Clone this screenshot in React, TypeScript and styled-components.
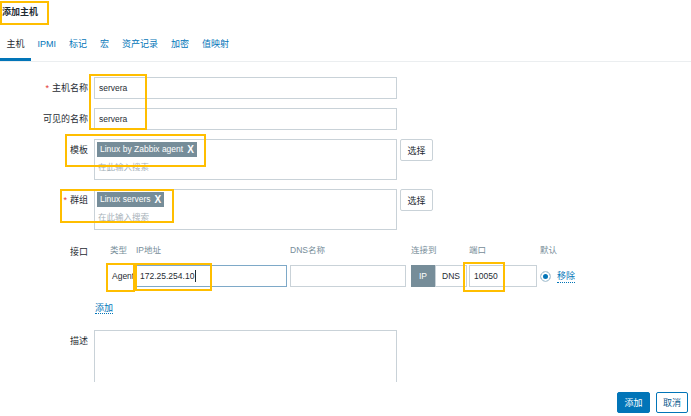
import React from "react";
import styled, { createGlobalStyle } from "styled-components";

const FONT = `"Liberation Sans", "Noto Sans CJK SC", sans-serif`;

const Global = createGlobalStyle`
  html, body { margin: 0; padding: 0; background: #ffffff; }
  body { font-family: ${FONT}; }
  * { box-sizing: border-box; }
`;

const Page = styled.div`
  position: relative;
  width: 691px;
  height: 416px;
  overflow: hidden;
  display: flex;
  flex-direction: column;
  background: #ffffff;
  color: #1f2c33;
  font-family: ${FONT};
  font-size: 8.5px;
`;

const Header = styled.header`
  height: 36px;
  flex: none;
  padding: 5px 0 0 2px;
`;

const Title = styled.h1`
  margin: 0;
  font-size: 9px;
  font-weight: bold;
  line-height: 14px;
  color: #1f2c33;
`;

const TabBar = styled.nav`
  flex: none;
  display: flex;
  height: 26px;
  border-bottom: 1px solid #ebeef0;
`;

const Tab = styled.span<{ $active?: boolean }>`
  height: 25px;
  padding: 2px 6.5px 0;
  font-size: 9px;
  line-height: 12px;
  color: ${(p) => (p.$active ? "#1f2c33" : "#0275b8")};
  border-bottom: 3px solid ${(p) => (p.$active ? "#0275b8" : "transparent")};
`;

const Body = styled.main`
  flex: 1 1 auto;
  overflow: hidden;
  padding-top: 15px;
`;

const Form = styled.div`
  display: grid;
  grid-template-columns: 88px 1fr;
  column-gap: 6px;
  row-gap: 9px;
  align-items: start;
`;

const Label = styled.label<{ $padTop?: number; $lh?: number }>`
  text-align: right;
  font-size: 9px;
  line-height: ${(p) => p.$lh ?? 22}px;
  padding-top: ${(p) => p.$padTop ?? 0}px;
  color: #1f2c33;
  white-space: nowrap;
`;

const Req = styled.span`
  color: #e33734;
  font-size: 9px;
  margin-right: 3px;
`;

const TextInput = styled.input<{ $w: number }>`
  display: block;
  width: ${(p) => p.$w}px;
  height: 22px;
  margin: 0;
  padding: 0 4px;
  border: 1px solid #c9d2d8;
  border-radius: 0;
  background: #ffffff;
  font-family: ${FONT};
  font-size: 8.5px;
  color: #1f2c33;
  outline: none;
`;

const FocusField = styled.div<{ $w: number }>`
  display: flex;
  align-items: center;
  width: ${(p) => p.$w}px;
  height: 22px;
  padding: 0 3px;
  border: 1px solid #7ea9c8;
  font-size: 8.5px;
  color: #1f2c33;
`;

const Caret = styled.span`
  display: inline-block;
  width: 1px;
  height: 12px;
  background: #1f2c33;
  margin-left: 1px;
`;

const PickerRow = styled.div`
  display: flex;
  align-items: flex-start;
  gap: 3px;
`;

const MultiBox = styled.div`
  width: 303px;
  height: 41px;
  border: 1px solid #c9d2d8;
  padding: 2px 1px 1px 2px;
`;

const Tag = styled.span`
  display: inline-flex;
  align-items: center;
  height: 15px;
  padding: 0 3px;
  background: #768d99;
  color: #ffffff;
  font-size: 8.5px;
  line-height: 15px;
`;

const TagX = styled.span`
  margin-left: 4px;
  font-weight: bold;
  font-size: 10px;
`;

const Placeholder = styled.div`
  margin-top: 4px;
  padding-left: 1px;
  font-size: 8.5px;
  line-height: 12px;
  color: #a7b2b9;
`;

const SelectButton = styled.button`
  width: 33px;
  height: 22px;
  margin: 0;
  padding: 0;
  border: 1px solid #c9d2d8;
  border-radius: 2px;
  background: #ffffff;
  font-family: ${FONT};
  font-size: 9px;
  color: #1f2c33;
`;

const IfaceGrid = styled.div`
  display: grid;
  grid-template-columns: 26px 154px 121px 58px 71px auto;
  align-items: center;
  row-gap: 8px;
  padding: 4px 0 0 16px;
`;

const HeadCell = styled.div`
  font-size: 8.5px;
  line-height: 14px;
  color: #768d99;
  white-space: nowrap;
`;

const TypeCell = styled.div`
  padding-left: 2px;
  font-size: 8.5px;
  color: #1f2c33;
`;

const Toggle = styled.div`
  display: flex;
  width: 56px;
  height: 22px;
`;

const ToggleOpt = styled.span<{ $on?: boolean; $w: number }>`
  display: flex;
  align-items: center;
  justify-content: center;
  width: ${(p) => p.$w}px;
  height: 22px;
  font-size: 8.5px;
  background: ${(p) => (p.$on ? "#768d99" : "#ffffff")};
  color: ${(p) => (p.$on ? "#ffffff" : "#1f2c33")};
  border: 1px solid ${(p) => (p.$on ? "#768d99" : "#c9d2d8")};
`;

const DefaultCell = styled.div`
  display: flex;
  align-items: center;
  gap: 6px;
`;

const Radio = styled.span`
  display: inline-block;
  width: 11px;
  height: 11px;
  border-radius: 50%;
  border: 1px solid #c9d2d8;
  background: #0275b8;
  box-shadow: inset 0 0 0 2px #ffffff;
`;

const Link = styled.a`
  font-size: 9px;
  line-height: 12px;
  color: #0275b8;
  text-decoration: none;
  border-bottom: 1px dotted #0275b8;
  cursor: pointer;
`;

const LinkRow = styled.div`
  padding: 5px 0 0 1px;
  line-height: 14px;
`;

const TextArea = styled.textarea`
  display: block;
  width: 303px;
  height: 70px;
  margin: 6px 0 0 0;
  padding: 3px;
  border: 1px solid #c9d2d8;
  border-radius: 0;
  resize: none;
  font-family: ${FONT};
  font-size: 8.5px;
  outline: none;
`;

const Footer = styled.footer`
  flex: none;
  height: 34px;
  display: flex;
  justify-content: flex-end;
  align-items: flex-start;
  gap: 6px;
  padding: 10px 3px 0 0;
`;

const Button = styled.button<{ $primary?: boolean; $w: number }>`
  width: ${(p) => p.$w}px;
  height: 21px;
  margin: 0;
  padding: 0;
  border-radius: 2px;
  border: 1px solid #0275b8;
  background: ${(p) => (p.$primary ? "#0275b8" : "#ffffff")};
  color: ${(p) => (p.$primary ? "#ffffff" : "#0a5a8c")};
  font-family: ${FONT};
  font-size: 9px;
`;

const Highlight = styled.div`
  position: absolute;
  border: 2px solid #ffbe00;
  pointer-events: none;
`;

const highlights = [
  { left: 0, top: 1, width: 49, height: 24 },
  { left: 89, top: 74, width: 58, height: 56 },
  { left: 65, top: 134, width: 141, height: 33 },
  { left: 60, top: 189, width: 114, height: 34 },
  { left: 106, top: 263, width: 29, height: 29 },
  { left: 135, top: 263, width: 77, height: 28 },
  { left: 463, top: 262, width: 42, height: 30 },
];

const tabs = ["主机", "IPMI", "标记", "宏", "资产记录", "加密", "值映射"];

export default function App() {
  return (
    <>
      <Global />
      <Page>
        <Header>
          <Title>添加主机</Title>
        </Header>
        <TabBar>
          {tabs.map((t, i) => (
            <Tab key={t} $active={i === 0}>
              {t}
            </Tab>
          ))}
        </TabBar>
        <Body>
          <Form>
            <Label>
              <Req>*</Req>主机名称
            </Label>
            <TextInput $w={303} readOnly value="servera" />

            <Label>可见的名称</Label>
            <TextInput $w={303} readOnly value="servera" />

            <Label>模板</Label>
            <PickerRow>
              <MultiBox>
                <Tag>
                  Linux by Zabbix agent<TagX>X</TagX>
                </Tag>
                <Placeholder>在此输入搜索</Placeholder>
              </MultiBox>
              <SelectButton>选择</SelectButton>
            </PickerRow>

            <Label>
              <Req>*</Req>群组
            </Label>
            <PickerRow>
              <MultiBox>
                <Tag>
                  Linux servers<TagX>X</TagX>
                </Tag>
                <Placeholder>在此输入搜索</Placeholder>
              </MultiBox>
              <SelectButton>选择</SelectButton>
            </PickerRow>

            <Label $padTop={6} $lh={14}>
              接口
            </Label>
            <IfaceGrid>
              <HeadCell>类型</HeadCell>
              <HeadCell>IP地址</HeadCell>
              <HeadCell>DNS名称</HeadCell>
              <HeadCell>连接到</HeadCell>
              <HeadCell>端口</HeadCell>
              <HeadCell>默认</HeadCell>

              <TypeCell>Agent</TypeCell>
              <FocusField $w={151}>
                172.25.254.10
                <Caret />
              </FocusField>
              <TextInput $w={116} readOnly value="" />
              <Toggle>
                <ToggleOpt $on $w={24}>
                  IP
                </ToggleOpt>
                <ToggleOpt $w={32}>DNS</ToggleOpt>
              </Toggle>
              <TextInput $w={68} readOnly value="10050" />
              <DefaultCell>
                <Radio />
                <Link>移除</Link>
              </DefaultCell>
            </IfaceGrid>

            <span />
            <LinkRow>
              <Link>添加</Link>
            </LinkRow>

            <Label $padTop={6}>描述</Label>
            <TextArea readOnly value="" />
          </Form>
        </Body>
        <Footer>
          <Button $primary $w={33}>
            添加
          </Button>
          <Button $w={32}>取消</Button>
        </Footer>
        {highlights.map((h, i) => (
          <Highlight
            key={i}
            style={{ left: h.left, top: h.top, width: h.width, height: h.height }}
          />
        ))}
      </Page>
    </>
  );
}
